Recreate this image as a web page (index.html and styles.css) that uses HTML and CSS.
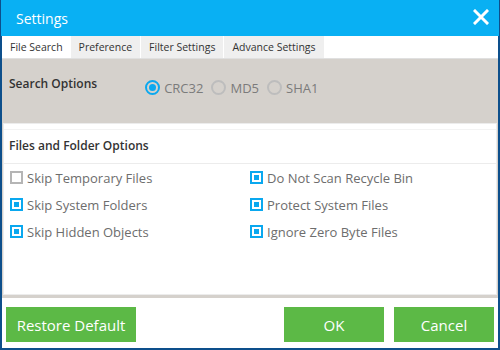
FILE: index.html
```html
<!DOCTYPE html>
<html lang="en">
<head>
    <meta charset="UTF-8">
    <title>Settings</title>
    <link rel="stylesheet" href="styles.css">
</head>
<body>
    <div class="window">
        <div class="titlebar">
            <span class="title">Settings</span>
            <svg class="close" width="16" height="16" viewBox="0 0 16 16">
                <path d="M2 2 L14 14 M14 2 L2 14" stroke="#fff" stroke-width="3" stroke-linecap="square"/>
            </svg>
        </div>

        <div class="tabs">
            <div class="tab active">File Search</div>
            <div class="tab">Preference</div>
            <div class="tab">Filter Settings</div>
            <div class="tab">Advance Settings</div>
        </div>

        <div class="content">
            <div class="search-options">
                <span class="section-title">Search Options</span>
                <div class="radios">
                    <label class="radio checked"><span class="dot"></span>CRC32</label>
                    <label class="radio"><span class="dot"></span>MD5</label>
                    <label class="radio"><span class="dot"></span>SHA1</label>
                </div>
            </div>

            <div class="files-panel">
                <div class="panel-header section-title">Files and Folder Options</div>
                <div class="options">
                    <label class="check"><span class="box"></span>Skip Temporary Files</label>
                    <label class="check checked"><span class="box"></span>Do Not Scan Recycle Bin</label>
                    <label class="check checked"><span class="box"></span>Skip System Folders</label>
                    <label class="check checked"><span class="box"></span>Protect System Files</label>
                    <label class="check checked"><span class="box"></span>Skip Hidden Objects</label>
                    <label class="check checked"><span class="box"></span>Ignore Zero Byte Files</label>
                </div>
            </div>
        </div>

        <div class="footer">
            <button class="btn">Restore Default</button>
            <div class="spacer"></div>
            <button class="btn small">OK</button>
            <button class="btn small">Cancel</button>
        </div>
    </div>
</body>
</html>
```

FILE: styles.css
```css
* {
    box-sizing: border-box;
}
body {
    margin: 0;
    font-family: "Open Sans", "Noto Sans", sans-serif;
    background: #fff;
}
.window {
    width: 500px;
    height: 350px;
    display: flex;
    flex-direction: column;
    border: 2px solid #0d4f8b;
    border-top: none;
}
.titlebar {
    height: 36px;
    margin: 0 -2px;
    padding: 0 10px 0 15px;
    background-color: #09b0f3;
    display: flex;
    align-items: center;
    justify-content: space-between;
    border-left: 1px solid #0d4f8b;
    border-right: 1px solid #0d4f8b;
}
.title {
    color: #fff;
    font-size: 14px;
}
.close {
    margin-top: -2px;
}
.tabs {
    height: 23px;
    display: flex;
    border-bottom: 1px solid #e0e0e0;
    background: #fff;
}
.tab {
    font-size: 10.5px;
    color: #333;
    padding: 0 8px;
    line-height: 22px;
    background: #efefef;
    border-right: 1px solid #fff;
}
.tab.active {
    background: #fff;
    padding: 0 7px 0 8px;
}
.content {
    flex: 1;
    background: #d5d1cc;
    display: flex;
    flex-direction: column;
    padding: 0 1px 3px 1px;
}
.search-options {
    height: 64px;
    display: flex;
    align-items: center;
    padding: 0 0 15px 6px;
}
.section-title {
    font-size: 12px;
    font-weight: 600;
    color: #333;
}
.radios {
    display: flex;
    gap: 8px;
    margin-left: 48px;
    margin-top: 8px;
}
.radio {
    display: flex;
    align-items: center;
    gap: 4px;
    font-size: 13px;
    color: #7b7b7b;
}
.radio .dot {
    width: 15px;
    height: 15px;
    border-radius: 50%;
    border: 2px solid #bdbdbd;
    display: flex;
    align-items: center;
    justify-content: center;
}
.radio.checked .dot {
    border-color: #0aa8ef;
}
.radio.checked .dot::after {
    content: "";
    width: 7px;
    height: 7px;
    border-radius: 50%;
    background: #0aa8ef;
}
.files-panel {
    flex: 1;
    background: #fff;
    border: 1px solid #ececec;
    padding: 5px 0 0 0;
}
.panel-header {
    height: 35px;
    line-height: 32px;
    padding-left: 5px;
    border-top: 1px solid #f3f3f3;
    border-bottom: 1px solid #ececec;
}
.options {
    display: grid;
    grid-template-columns: 240px 1fr;
    grid-auto-rows: 27px;
    padding: 0 0 0 6px;
}
.check {
    display: flex;
    align-items: center;
    gap: 4px;
    font-size: 13px;
    color: #6d6d6d;
}
.check .box {
    width: 13px;
    height: 13px;
    border: 2px solid #b5b5b5;
    display: flex;
    align-items: center;
    justify-content: center;
}
.check.checked .box {
    border-color: #0aa8ef;
}
.check.checked .box::after {
    content: "";
    width: 5px;
    height: 5px;
    background: #0aa8ef;
}
.footer {
    height: 50px;
    display: flex;
    align-items: flex-start;
    padding: 9px 4px 0 4px;
    gap: 10px;
    background: #fff;
}
.spacer {
    flex: 1;
}
.btn {
    height: 35px;
    width: 130px;
    border: none;
    background-color: #5cb946;
    color: #fff;
    font-family: "Open Sans", "Noto Sans", sans-serif;
    font-size: 15px;
    padding: 0;
    cursor: pointer;
}
.btn.small {
    width: 100px;
}
```
